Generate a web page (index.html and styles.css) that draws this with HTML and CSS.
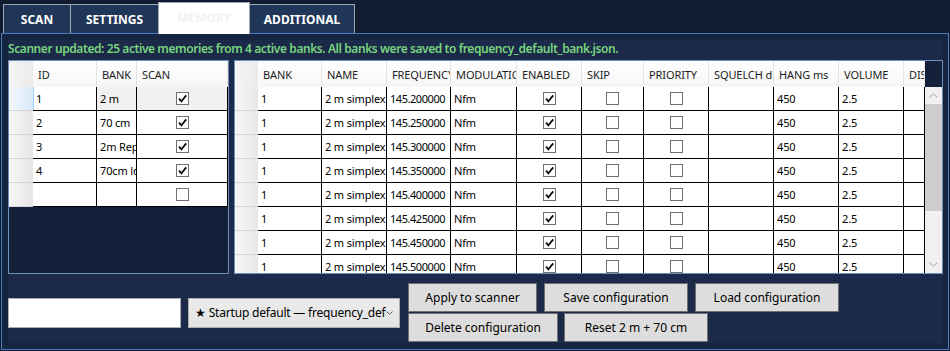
FILE: index.html
```html
<!DOCTYPE html>
<html lang="en">
<head>
<meta charset="UTF-8" />
<title>Scanner - Memory</title>
<link rel="stylesheet" href="styles.css">
</head>
<body>
  <nav class="tabs">
    <div class="tab tab-scan">SCAN</div>
    <div class="tab tab-settings">SETTINGS</div>
    <div class="tab tab-memory active">MEMORY</div>
    <div class="tab tab-additional">ADDITIONAL</div>
  </nav>

  <section class="panel">
    <div class="content">
      <p class="status">Scanner updated: 25 active memories from 4 active banks. All banks were saved to frequency_default_bank.json.</p>

      <div class="grids">
        <!-- Banks -->
        <div class="grid grid-banks">
          <table>
            <colgroup>
              <col style="width:24px"><col style="width:64px"><col style="width:40px"><col style="width:91px">
            </colgroup>
            <thead>
              <tr><th class="rh"></th><th>ID</th><th>BANK</th><th>SCAN</th></tr>
            </thead>
            <tbody>
              <tr class="current"><td class="rh"></td><td class="focus">1</td><td>2 m</td><td class="c"><span class="cb on"></span></td></tr>
              <tr><td class="rh"></td><td>2</td><td>70 cm</td><td class="c"><span class="cb on"></span></td></tr>
              <tr><td class="rh"></td><td>3</td><td>2m Repeater</td><td class="c"><span class="cb on"></span></td></tr>
              <tr><td class="rh"></td><td>4</td><td>70cm local</td><td class="c"><span class="cb on"></span></td></tr>
              <tr><td class="rh"></td><td></td><td></td><td class="c"><span class="cb"></span></td></tr>
            </tbody>
          </table>
        </div>

        <!-- Memories -->
        <div class="grid grid-memories">
          <div class="grid-body">
            <table>
              <colgroup>
                <col style="width:23px"><col style="width:64px"><col style="width:65px"><col style="width:64px">
                <col style="width:66px"><col style="width:65px"><col style="width:62px"><col style="width:65px">
                <col style="width:65px"><col style="width:65px"><col style="width:65px"><col style="width:21px">
              </colgroup>
              <thead>
                <tr>
                  <th class="rh"></th><th>BANK</th><th>NAME</th><th>FREQUENCY</th><th>MODULATION</th>
                  <th>ENABLED</th><th>SKIP</th><th>PRIORITY</th><th>SQUELCH dB</th><th>HANG ms</th>
                  <th>VOLUME</th><th>DISPLAY</th>
                </tr>
              </thead>
              <tbody id="memRows"></tbody>
            </table>
          </div>
          <div class="vscroll">
            <div class="vscroll-head"></div>
            <div class="vscroll-track">
              <div class="arrow">
                <svg viewBox="0 0 9 5" width="9" height="5"><polyline points="0.5 4.5 4.5 0.8 8.5 4.5"/></svg>
              </div>
              <div class="thumb"></div>
              <div class="rest"></div>
              <div class="arrow">
                <svg viewBox="0 0 9 5" width="9" height="5"><polyline points="0.5 0.5 4.5 4.2 8.5 0.5"/></svg>
              </div>
            </div>
          </div>
        </div>
      </div>

      <div class="controls">
        <input class="textbox" type="text" aria-label="Configuration name" />
        <div class="combo">
          <span class="combo-text">★ Startup default — frequency_default_bank.json</span>
          <svg class="combo-arrow" viewBox="0 0 7 4" width="7" height="4"><polyline points="0.5 0.5 3.5 3.3 6.5 0.5"/></svg>
        </div>
        <div class="buttons">
          <div class="btn-row">
            <button class="btn btn-apply">Apply to scanner</button>
            <button class="btn btn-save">Save configuration</button>
            <button class="btn btn-load">Load configuration</button>
          </div>
          <div class="btn-row second">
            <button class="btn btn-delete">Delete configuration</button>
            <button class="btn btn-reset">Reset 2 m + 70 cm</button>
          </div>
        </div>
      </div>
    </div>
  </section>

<script>
  const freqs = ['145.200000', '145.250000', '145.300000', '145.350000',
                 '145.400000', '145.425000', '145.450000', '145.500000'];
  const body = document.getElementById('memRows');

  freqs.forEach(f => {
    const tr = document.createElement('tr');
    tr.innerHTML =
      '<td class="rh"></td><td>1</td><td>2 m simplex</td><td class="num">' + f + '</td><td>Nfm</td>' +
      '<td class="c"><span class="cb on"></span></td>' +
      '<td class="c"><span class="cb"></span></td>' +
      '<td class="c"><span class="cb"></span></td>' +
      '<td></td><td>450</td><td>2.5</td><td></td>';
    body.appendChild(tr);
  });

  // check marks
  document.querySelectorAll('.cb.on').forEach(cb => {
    cb.innerHTML = '<svg viewBox="0 0 11 11" width="11" height="11"><polyline points="2 5.6 4.4 8.3 9.2 2.4"/></svg>';
  });
</script>
</body>
</html>
```

FILE: styles.css
```css
*, *::before, *::after {
  box-sizing: border-box;
}

body {
  margin: 0;
  width: 950px;
  height: 351px;
  overflow: hidden;
  background: #111c30;
  font-family: 'Noto Sans', 'Open Sans', sans-serif;
}

/* Tabs */
.tabs {
  display: flex;
  align-items: flex-end;
  height: 33px;
  padding-left: 3px;
}

.tab {
  height: 29px;
  border: 1px solid #9ca6b3;
  border-bottom: none;
  background: #203659;
  color: #fff;
  font-size: 12px;
  font-weight: 700;
  display: flex;
  align-items: center;
  justify-content: center;
}

.tab + .tab {
  margin-left: -1px;
}

.tab-scan { width: 68px; }
.tab-settings { width: 89px; }
.tab-memory { width: 92px; }
.tab-additional { width: 106px; }

.tab.active {
  position: relative;
  z-index: 1;
  height: 32px;
  margin-bottom: -1px;
  background: #fff;
  color: #f2f2f2;
  padding-bottom: 2px;
}

/* Panel */
.panel {
  margin-left: 1px;
  width: 948px;
  height: 317px;
  border: 1px solid #4a78bb;
  background: #15243f;
  padding: 6px 5px 6px 6px;
}

.content {
  height: 303px;
  background: #1a2a48;
  display: flex;
  flex-direction: column;
}

.status {
  margin: 0;
  height: 20px;
  line-height: 17px;
  font-size: 12px;
  font-weight: 600;
  letter-spacing: -0.42px;
  color: #78d37f;
  white-space: nowrap;
}

/* Grids */
.grids {
  display: flex;
  gap: 5px;
  height: 214px;
}

.grid {
  height: 214px;
  border: 1px solid #6d8fbe;
  background: #132039;
  overflow: hidden;
}

.grid-banks { width: 221px; }

.grid-memories {
  width: 709px;
  display: flex;
}

.grid-body {
  width: 690px;
  overflow: hidden;
}

table {
  table-layout: fixed;
  border-collapse: separate;
  border-spacing: 0;
  width: 100%;
  font-size: 11px;
  color: #000;
}

thead tr { height: 26px; }
tbody tr { height: 24px; }

th {
  background: linear-gradient(#ffffff, #f6f6f6);
  border-right: 1px solid #e4e4e4;
  font-weight: 400;
  color: #1c1c1c;
  text-align: left;
  padding: 0 0 0 5px;
  letter-spacing: -0.1px;
  white-space: nowrap;
  overflow: hidden;
}

td {
  background: #fff;
  border-right: 1px solid #000;
  border-bottom: 1px solid #000;
  padding: 0 0 0 3px;
  letter-spacing: -0.15px;
  white-space: nowrap;
  overflow: hidden;
}

td.num { letter-spacing: -0.45px; }

th.rh {
  background: linear-gradient(to right, #f4f4f4, #ebebeb);
  border-right: none;
}

td.rh {
  background: linear-gradient(to right, #f7f7f7, #e6e6e6);
  border-right: none;
  border-bottom: 1px solid #d6d6d6;
  padding: 0;
}

tr.current td { background: #f0f0f0; }
tr.current td.rh { background: linear-gradient(to right, #f3f8fd, #d8eaf9); }
tr.current td.focus {
  background: #fff;
  box-shadow: inset 1px 0 0 #9fd0f5;
}

td.c {
  text-align: center;
  padding: 0;
}

.cb {
  display: inline-block;
  width: 13px;
  height: 13px;
  border: 1px solid #707070;
  background: #fff;
  vertical-align: middle;
  margin-top: -3px;
}

.cb svg {
  display: block;
  fill: none;
  stroke: #111;
  stroke-width: 1.8;
}

/* Scrollbar */
.vscroll {
  width: 17px;
  display: flex;
  flex-direction: column;
}

.vscroll-head { height: 26px; }

.vscroll-track {
  flex: 1;
  background: #f0f0f0;
  display: flex;
  flex-direction: column;
}

.arrow {
  height: 17px;
  display: flex;
  align-items: center;
  justify-content: center;
}

.arrow svg {
  fill: none;
  stroke: #a3a3a3;
  stroke-width: 1;
}

.thumb {
  height: 107px;
  background: #cdcdcd;
}

.rest { flex: 1; }

/* Bottom controls */
.controls {
  display: flex;
  align-items: center;
  padding-top: 9px;
}

.textbox {
  width: 173px;
  height: 30px;
  margin: 0;
  border: 1px solid #abadb3;
  background: #fff;
  font: inherit;
}

.combo {
  width: 212px;
  height: 30px;
  margin-left: 7px;
  border: 1px solid #acacac;
  background: linear-gradient(#ececec, #e3e3e3);
  display: flex;
  align-items: center;
  padding: 0 6px 0 6px;
  font-size: 12px;
  letter-spacing: -0.2px;
  color: #000;
}

.combo-text {
  flex: 1;
  white-space: nowrap;
  overflow: hidden;
  padding-right: 10px;
}

.combo-arrow {
  fill: none;
  stroke: #606060;
  stroke-width: 1;
}

.buttons {
  margin-left: 8px;
  display: flex;
  flex-direction: column;
  gap: 1px;
}

.btn-row {
  display: flex;
  gap: 7px;
}

.btn-row.second { gap: 6px; }

.btn {
  height: 29px;
  margin: 0;
  border: 1px solid #707070;
  background: #dddddd;
  font-family: inherit;
  font-size: 12px;
  color: #000;
  padding: 0;
}

.btn-apply { width: 129px; }
.btn-save { width: 144px; }
.btn-load { width: 144px; }
.btn-delete { width: 150px; }
.btn-reset { width: 144px; }
```
